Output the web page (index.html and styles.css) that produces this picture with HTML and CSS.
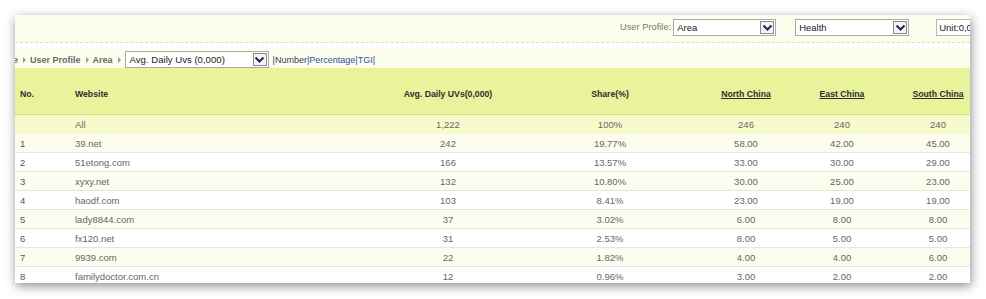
FILE: index.html
```html
<!DOCTYPE html>
<html>
<head>
<meta charset="utf-8">
<link rel="stylesheet" href="styles.css">
</head>
<body>
<div class="panel">
  <div class="topbar">
    <span class="label">User Profile:</span>
    <div class="select sel-area"><span>Area</span><i class="chev"><svg width="11" height="8" viewBox="0 0 11 8"><path d="M1.5 1.5 L5.5 5.5 L9.5 1.5" fill="none" stroke="#1a2a55" stroke-width="2"/></svg></i></div>
    <div class="select sel-health"><span>Health</span><i class="chev"><svg width="11" height="8" viewBox="0 0 11 8"><path d="M1.5 1.5 L5.5 5.5 L9.5 1.5" fill="none" stroke="#1a2a55" stroke-width="2"/></svg></i></div>
    <div class="unit">Unit:0,000</div>
  </div>
  <div class="crumbs">
    <span class="crumb">Home</span><i class="tri"></i>
    <span class="crumb">User Profile</span><i class="tri"></i>
    <span class="crumb">Area</span><i class="tri"></i>
    <div class="select sel-metric"><span>Avg. Daily Uvs (0,000)</span><i class="chev"><svg width="11" height="8" viewBox="0 0 11 8"><path d="M1.5 1.5 L5.5 5.5 L9.5 1.5" fill="none" stroke="#1a2a55" stroke-width="2"/></svg></i></div>
    <span class="modes"><span class="cur">|Number</span><a>|Percentage</a><a>|TGI</a>|</span>
  </div>
  <table class="data">
    <colgroup>
      <col class="c-no"><col class="c-site"><col class="c-uv"><col class="c-share"><col class="c-reg"><col class="c-reg"><col class="c-reg">
    </colgroup>
    <thead>
      <tr>
        <th class="l">No.</th><th class="l">Website</th><th>Avg. Daily UVs(0,000)</th><th>Share(%)</th>
        <th><u>North China</u></th><th><u>East China</u></th><th><u>South China</u></th>
      </tr>
    </thead>
    <tbody>
      <tr class="all"><td class="l"></td><td class="l">All</td><td>1,222</td><td>100%</td><td>246</td><td>240</td><td>240</td></tr>
      <tr class="odd"><td class="l">1</td><td class="l">39.net</td><td>242</td><td>19.77%</td><td>58.00</td><td>42.00</td><td>45.00</td></tr>
      <tr><td class="l">2</td><td class="l">51etong.com</td><td>166</td><td>13.57%</td><td>33.00</td><td>30.00</td><td>29.00</td></tr>
      <tr class="odd"><td class="l">3</td><td class="l">xyxy.net</td><td>132</td><td>10.80%</td><td>30.00</td><td>25.00</td><td>23.00</td></tr>
      <tr><td class="l">4</td><td class="l">haodf.com</td><td>103</td><td>8.41%</td><td>23.00</td><td>19.00</td><td>19.00</td></tr>
      <tr class="odd"><td class="l">5</td><td class="l">lady8844.com</td><td>37</td><td>3.02%</td><td>6.00</td><td>8.00</td><td>8.00</td></tr>
      <tr><td class="l">6</td><td class="l">fx120.net</td><td>31</td><td>2.53%</td><td>8.00</td><td>5.00</td><td>5.00</td></tr>
      <tr class="odd"><td class="l">7</td><td class="l">9939.com</td><td>22</td><td>1.82%</td><td>4.00</td><td>4.00</td><td>6.00</td></tr>
      <tr><td class="l">8</td><td class="l">familydoctor.com.cn</td><td>12</td><td>0.96%</td><td>3.00</td><td>2.00</td><td>2.00</td></tr>
    </tbody>
  </table>
</div>
</body>
</html>
```

FILE: styles.css
```css
html, body {
  margin: 0;
  padding: 0;
  background: #ffffff;
}
body {
  width: 986px;
  height: 299px;
  overflow: hidden;
  font-family: "Liberation Sans", Arial, sans-serif;
}
.panel {
  margin: 15px 0 0 15px;
  width: 955px;
  height: 268px;
  overflow: hidden;
  background: #ffffff;
  box-shadow: 1px 3px 10px rgba(0, 0, 0, 0.45);
}
.topbar {
  height: 28px;
  box-sizing: border-box;
  padding: 4px 0 0 605px;
  display: flex;
  align-items: flex-start;
  background: #fdfdee;
  border-bottom: 1px dashed #dfe29c;
  white-space: nowrap;
}
.label {
  font-size: 9.3px;
  color: #777;
  line-height: 17px;
  margin-right: 2px;
  flex-shrink: 0;
}
.select {
  flex-shrink: 0;
  box-sizing: border-box;
  height: 17px;
  background: #fff;
  border: 1px solid #a9a9a9;
  display: flex;
  align-items: center;
  justify-content: space-between;
  font-size: 9.5px;
  color: #222;
  padding-left: 3px;
}
.sel-area { width: 103px; }
.sel-health { width: 114px; margin-left: 19px; }
.chev {
  width: 14px;
  height: 13px;
  box-sizing: border-box;
  border: 1px solid #8a8a8a;
  margin-right: 1px;
  display: flex;
  align-items: center;
  justify-content: center;
  background: #f4f4f4;
}
.unit {
  flex-shrink: 0;
  margin-left: 27px;
  height: 17px;
  box-sizing: border-box;
  border: 1px solid #b8b8b8;
  background: #fff;
  font-size: 9.5px;
  color: #222;
  padding: 0 2px;
  line-height: 15px;
  width: 60px;
}
.crumbs {
  margin-top: 5px;
  height: 20px;
  background: #fdfdee;
  display: flex;
  align-items: center;
  white-space: nowrap;
  margin-left: -22px;
  padding-top: 3px;
  box-sizing: border-box;
}
.crumb {
  font-size: 9px;
  font-weight: bold;
  color: #6a6a6a;
}
.tri {
  display: inline-block;
  width: 0;
  height: 0;
  border-left: 3px solid #999;
  border-top: 3px solid transparent;
  border-bottom: 3px solid transparent;
  margin: 0 4px 0 5px;
}
.sel-metric {
  width: 144px;
  height: 17px;
  font-size: 9.6px;
  padding-left: 4px;
}
.modes {
  margin-left: 4px;
  font-size: 9px;
  color: #2a4fa8;
}
.modes .cur { color: #3a4060; }
.modes a { color: #2a4fa8; }
table.data {
  border-collapse: collapse;
  table-layout: fixed;
  width: 971px;
}
.c-no { width: 60px; }
.c-site { width: 299px; }
.c-uv { width: 148px; }
.c-share { width: 176px; }
.c-reg { width: 96px; }
th {
  height: 41px;
  padding: 5px 0 0 0;
  background: #e8f39c;
  border-bottom: 1px solid #d6e27c;
  font-size: 8.7px;
  font-weight: bold;
  color: #2e2e2e;
  text-align: center;
}
th u { text-decoration: underline; }
td {
  height: 18px;
  padding: 0;
  font-size: 9.5px;
  color: #666;
  text-align: center;
  border-bottom: 1px solid #e6e6de;
  white-space: nowrap;
}
th.l, td.l { text-align: left; }
th.l:first-child, td.l:first-child { padding-left: 5px; color: #555; }
th.l:first-child { color: #2e2e2e; }
tr.all td {
  background: #f7fbcc;
  height: 19px;
  border-bottom: none;
}
tr.odd td { background: #fdfdef; }
```
